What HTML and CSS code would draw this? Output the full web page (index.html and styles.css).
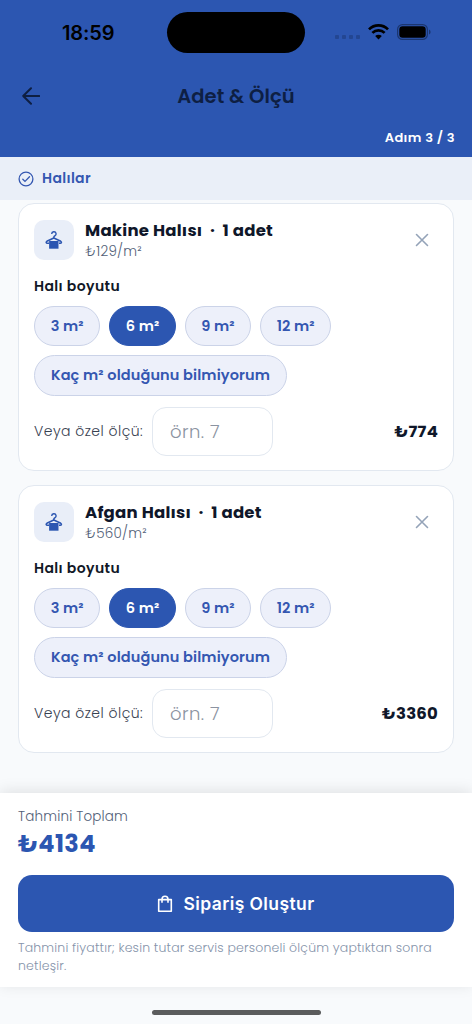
FILE: index.html
```html
<!DOCTYPE html>
<html lang="tr">
<head>
<meta charset="utf-8">
<title>Adet &amp; Ölçü</title>
<link rel="stylesheet" href="styles.css">
</head>
<body>
<svg width="0" height="0" class="defs">
  <symbol id="hanger" viewBox="0 0 20 20">
    <path d="M7.700 3.900a2.200 2.200 0 1 1 3 2.100c-.6.300-.9.600-.9 1.200v.8" fill="none" stroke="currentColor" stroke-width="1.400"/>
    <path d="M5 13.200H3.400c-1.400 0-1.700-1.300-.6-1.900L9.800 8l7 3.300c1.100.6.800 1.900-.6 1.900H15" fill="none" stroke="currentColor" stroke-width="1.500" stroke-linejoin="round"/>
    <path d="M5.100 11h9.400v7.700H5.100z" fill="currentColor"/>
  </symbol>
  <symbol id="close" viewBox="0 0 14 14">
    <path d="M1.500 1.500l11 11M12.500 1.500l-11 11" fill="none" stroke="currentColor" stroke-width="1.600" stroke-linecap="round"/>
  </symbol>
</svg>
<div class="screen">
  <header class="header">
    <div class="status">
      <span class="time">18:59</span>
      <span class="island"></span>
      <span class="signals">
        <span class="dots"><i></i><i></i><i></i><i></i></span>
        <svg class="wifi" width="21" height="16" viewBox="0 0 21 16"><g fill="none" stroke="#000" stroke-width="2.700"><path d="M1 5.400a13.400 13.400 0 0 1 19 0"/><path d="M4.400 8.900a8.600 8.600 0 0 1 12.200 0"/></g><path d="M7.200 12a4.700 4.700 0 0 1 6.600 0l-3.300 3.400z"/></svg>
        <svg class="battery" width="34" height="16" viewBox="0 0 34 16"><rect x=".6" y=".6" width="29.800" height="14.800" rx="4.800" fill="none" stroke="#1b3670" stroke-width="1.200"/><rect x="2.300" y="2.300" width="26.400" height="11.400" rx="3.200"/><path d="M32 5.500q1.600.7 1.600 2.500T32 10.500z" fill="#1b3670"/></svg>
      </span>
    </div>
    <div class="nav">
      <svg class="back" width="18" height="18" viewBox="0 0 18 18"><path d="M9 1.200L1.200 9 9 16.800M1.200 9h16" fill="none" stroke="currentColor" stroke-width="2" stroke-linecap="round" stroke-linejoin="round"/></svg>
      <h1 class="title">Adet &amp; Ölçü</h1>
    </div>
    <div class="step"><span>Adım 3 / 3</span></div>
  </header>
  <div class="section">
    <svg width="16" height="16" viewBox="0 0 16 16" fill="none" stroke="currentColor" stroke-width="1.300"><circle cx="8" cy="8" r="6.900"/><path d="M4.800 8.200l2.200 2.200 4.500-4.600" stroke-linecap="round"/></svg>
    <span class="section-name">Halılar</span>
  </div>
  <main class="list">
    <article class="card">
      <div class="card-head">
        <span class="thumb"><svg width="20" height="20"><use href="#hanger"/></svg></span>
        <div class="names"><h2 class="name">Makine Halısı&nbsp; ·&nbsp; 1 adet</h2><p class="unit">₺129/m²</p></div>
        <svg class="close" width="14" height="14"><use href="#close"/></svg>
      </div>
      <h3 class="label">Halı boyutu</h3>
      <div class="chips">
        <span class="chip"><b>3 m²</b></span><span class="chip active"><b>6 m²</b></span><span class="chip"><b>9 m²</b></span><span class="chip chip-12"><b>12 m²</b></span><span class="chip chip-wide"><b>Kaç m² olduğunu bilmiyorum</b></span>
      </div>
      <div class="custom">
        <span class="custom-label">Veya özel ölçü:</span>
        <span class="input">örn. 7</span>
        <strong class="price">₺774</strong>
      </div>
    </article>
    <article class="card">
      <div class="card-head">
        <span class="thumb"><svg width="20" height="20"><use href="#hanger"/></svg></span>
        <div class="names"><h2 class="name">Afgan Halısı&nbsp; ·&nbsp; 1 adet</h2><p class="unit">₺560/m²</p></div>
        <svg class="close" width="14" height="14"><use href="#close"/></svg>
      </div>
      <h3 class="label">Halı boyutu</h3>
      <div class="chips">
        <span class="chip"><b>3 m²</b></span><span class="chip active"><b>6 m²</b></span><span class="chip"><b>9 m²</b></span><span class="chip chip-12"><b>12 m²</b></span><span class="chip chip-wide"><b>Kaç m² olduğunu bilmiyorum</b></span>
      </div>
      <div class="custom">
        <span class="custom-label">Veya özel ölçü:</span>
        <span class="input">örn. 7</span>
        <strong class="price">₺3360</strong>
      </div>
    </article>
  </main>
  <footer class="footer">
    <p class="total-label">Tahmini Toplam</p>
    <p class="total">₺4134</p>
    <div class="submit">
      <svg width="16" height="18" viewBox="0 0 16 18" fill="none" stroke="currentColor" stroke-width="1.600" stroke-linejoin="round"><path d="M1.700 4.600h12.600v11.600H1.700zM5 7.700V4.200a3 3 0 0 1 6 0v3.500"/></svg>
      <span class="submit-text">Sipariş Oluştur</span>
    </div>
    <p class="note">Tahmini fiyattır; kesin tutar servis personeli ölçüm yaptıktan sonra<br>netleşir.</p>
  </footer>
  <div class="home"><span class="home-bar"></span></div>
</div>
</body>
</html>
```
FILE: styles.css
```css
* { box-sizing: border-box; }
body { margin: 0; font-family: Poppins, Inter, "Noto Sans", sans-serif; font-weight: 300; color: #111827; background: #f8fafc; }
h1, h2, h3, p { margin: 0; }
.defs { position: absolute; }
.screen { width: 472px; height: 1024px; display: flex; flex-direction: column; overflow: hidden; white-space: nowrap; }
.header { height: 157px; background: #2c56b1; flex: none; }
.status { height: 65px; display: grid; grid-template-columns: 167px 138px 1fr; align-items: center; }
.time { padding-left: 62px; font-family: Inter, sans-serif; font-size: 20px; font-weight: 600; color: #000; letter-spacing: -.1px; }
.island { height: 41px; border-radius: 21px; background: #000; }
.signals { display: flex; align-items: center; padding-left: 30px; height: 20px; margin-top: -2px; }
.dots { display: flex; gap: 3px; padding-top: 10px; width: 33px; }
.dots i { width: 4px; height: 4px; border-radius: 1px; background: #234692; }
.battery { margin-left: 8px; }
.nav { height: 62px; display: grid; grid-template-columns: 40px 1fr 40px; align-items: center; color: #0e1f43; }
.back { margin-left: 22px; }
.title { padding-top: 1px; font-size: 19.500px; line-height: 28px; font-weight: 600; text-align: center; letter-spacing: .1px; }
.step { text-align: right; padding: 1px 17px 0 0; color: #fff; font-size: 13px; line-height: 20px; font-weight: 600; letter-spacing: .35px; }
.section { height: 43px; flex: none; background: #eaeff8; display: flex; align-items: center; gap: 8px; padding-left: 18px; color: #3457b1; }
.section-name { font-size: 14px; font-weight: 600; letter-spacing: .35px; }
.list { height: 593px; flex: none; padding: 3px 18px 0; display: flex; flex-direction: column; gap: 14px; }
.card { height: 268px; background: #fff; border: 1px solid #e2e8f0; border-radius: 16px; padding: 16px 15px; }
.card-head { height: 40px; display: flex; align-items: center; }
.thumb { width: 40px; height: 40px; border-radius: 10px; background: #e9eef8; display: grid; place-items: center; color: #2c56b1; }
.names { flex: 1; padding: 0 0 1px 11px; }
.name { font-size: 16.500px; line-height: 23px; font-weight: 700; color: #0f172a; letter-spacing: .25px; }
.unit { font-size: 13.500px; line-height: 19px; color: #526077; letter-spacing: .25px; }
.close { margin-right: 9px; color: #94a3b8; }
.label { margin-top: 15px; font-size: 14px; line-height: 22px; font-weight: 600; color: #111827; letter-spacing: .4px; }
.chips { margin-top: 8.500px; display: flex; flex-wrap: wrap; gap: 9px; }
.chip { width: 66.400px; height: 40.500px; border: 1px solid #cbd3e8; border-radius: 21px; background: #edf0fa; color: #3457b1; display: flex; align-items: center; justify-content: center; font-size: 14.500px; letter-spacing: .12px; }
.chip b { font-weight: 600; padding-top: 1px; }
.chip-12 { width: 71px; }
.chip-wide { width: 253px; }
.chip.active { background: #2c56b1; border-color: #2c56b1; color: #fff; }
.custom { margin-top: 11.500px; height: 48px; display: flex; align-items: center; }
.custom-label { width: 118px; font-size: 14px; color: #374151; letter-spacing: .48px; }
.input { width: 121px; height: 49px; border: 1px solid #e2e8f0; border-radius: 14px; padding-left: 17px; font-size: 18px; line-height: 47px; color: #8b93a1; letter-spacing: .45px; }
.price { margin-left: auto; font-size: 16.500px; font-weight: 700; color: #0f172a; letter-spacing: .2px; }
.footer { position: relative; height: 194px; flex: none; background: #fff; padding: 14px 18px 0; box-shadow: 0 -2px 14px rgba(0, 0, 0, .1); }
.total-label { font-size: 13.500px; line-height: 20px; color: #526077; letter-spacing: .17px; }
.total { font-size: 24px; line-height: 34px; font-weight: 700; color: #2c56b1; letter-spacing: .35px; }
.submit { margin-top: 14px; height: 57px; border-radius: 14px; background: #2c56b1; color: #fff; display: flex; align-items: center; justify-content: center; gap: 10px; }
.submit-text { font-family: Inter, sans-serif; font-size: 17.500px; font-weight: 600; letter-spacing: .4px; }
.note { margin-top: 7px; font-size: 12.500px; line-height: 17.500px; color: #8593aa; letter-spacing: .17px; }
.home { flex: 1; display: flex; justify-content: center; padding-top: 23px; }
.home-bar { width: 169px; height: 5px; border-radius: 3px; background: #5b5c5d; }
```
